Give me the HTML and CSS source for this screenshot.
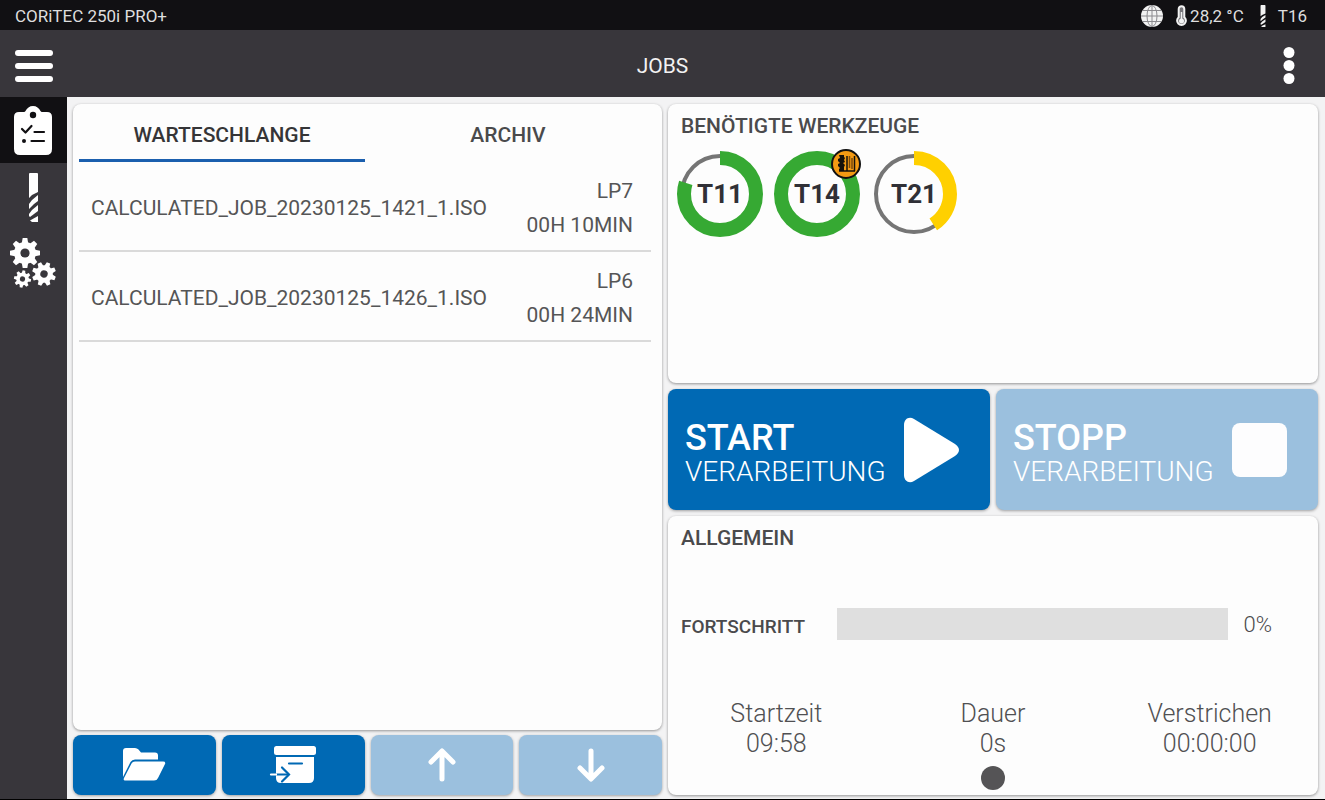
FILE: index.html
```html
<!DOCTYPE html>
<html lang="de">
<head>
<meta charset="utf-8">
<meta name="viewport" content="width=device-width, initial-scale=1">
<title>Jobs</title>
<link rel="stylesheet" href="styles.css">
</head>
<body>
<svg class="defs" aria-hidden="true">
  <defs>
    <mask id="gear-hole" maskUnits="userSpaceOnUse" x="-17" y="-17" width="34" height="34"><rect x="-17" y="-17" width="34" height="34" fill="#fff"/><circle r="4.600" fill="#000"/></mask>
    <g id="gear">
      <g mask="url(#gear-hole)">
        <circle r="11" />
        <path d="M-3.200-10L-2.300-15H2.300L3.200-10V10L2.300 15H-2.300L-3.200 10Z"/>
        <path transform="rotate(45)" d="M-3.200-10L-2.300-15H2.300L3.200-10V10L2.300 15H-2.300L-3.200 10Z"/>
        <path transform="rotate(90)" d="M-3.200-10L-2.300-15H2.300L3.200-10V10L2.300 15H-2.300L-3.200 10Z"/>
        <path transform="rotate(135)" d="M-3.200-10L-2.300-15H2.300L3.200-10V10L2.300 15H-2.300L-3.200 10Z"/>
      </g>
    </g>
    <g id="drill">
      <path d="M1 1Q1 0 2 0H9Q10 0 10 1V19L4 22L1 25Z"/>
      <path d="M10 22V28L6 31L1 36V31L4 27Z"/>
      <path d="M10 32V38L6 41L2 44L1 43V41L4 37Z"/>
      <path d="M10 43V49H4L2 47.500Z"/>
    </g>
  </defs>
</svg>
<div class="app">
  <header class="statusbar">
    <span>CORiTEC 250i PRO+</span>
    <div class="status">
      <svg class="globe" viewBox="0 0 22 22" aria-hidden="true"><circle cx="11" cy="11" r="11" fill="#f2f2f2"/><g fill="none" stroke="#8b8a8e" stroke-width="1"><ellipse cx="11" cy="11" rx="5" ry="10.500"/><path d="M11 0V22M0 11H22M2 5.500H20M2 16.500H20"/></g></svg>
      <span class="temperature">
        <svg width="11" height="22" viewBox="0 0 11 22" aria-hidden="true"><path d="M5.500 1.200A2.800 2.800 0 0 1 8.300 4V12.200A4.400 4.400 0 1 1 2.700 12.200V4A2.800 2.800 0 0 1 5.500 1.200Z" fill="#77767a" stroke="#f2f2f2" stroke-width="2"/><circle cx="5.500" cy="16" r="2.500" fill="#f2f2f2"/><path d="M5.500 7V16" stroke="#f2f2f2" stroke-width="1.500"/></svg>
        28,2 °C
      </span>
      <span class="tool-now">
        <svg width="6" height="22" viewBox="0 0 11 49" preserveAspectRatio="none" fill="#f2f2f2" aria-hidden="true"><use href="#drill"/></svg>
        T16
      </span>
    </div>
  </header>
  <div class="titlebar">
    <button class="icon-button" aria-label="Menü"><svg width="38" height="32" viewBox="0 0 38 32" fill="#fff"><rect width="38" height="6" rx="3"/><rect y="13" width="38" height="6" rx="3"/><rect y="26" width="38" height="6" rx="3"/></svg></button>
    <h1>JOBS</h1>
    <button class="icon-button more" aria-label="Mehr"><svg width="12" height="38" viewBox="0 0 12 38" fill="#fff"><circle cx="6" cy="5.500" r="5.500"/><circle cx="6" cy="18.500" r="5.500"/><circle cx="6" cy="31.500" r="5.500"/></svg></button>
  </div>
  <div class="body">
    <nav class="sidebar">
      <button class="nav-item active" aria-label="Jobs">
        <svg width="38" height="50" viewBox="0 0 38 50"><path fill="#fff" d="M5 6H10Q11 6 11.500 5C13 2 15.500 0 19 0S25 2 26.500 5Q27 6 28 6H33Q38 6 38 11V43Q38 49 32 49H6Q0 49 0 43V11Q0 6 5 6Z"/><circle cx="19" cy="9" r="3.200" fill="#111013"/><g fill="none" stroke="#111013" stroke-width="2.200" stroke-linecap="round" stroke-linejoin="round"><path d="M8 23L11.500 26.500L17.500 20M20.500 26H30M17.500 35H30"/></g><circle cx="10" cy="35" r="2" fill="#111013"/></svg>
      </button>
      <button class="nav-item" aria-label="Werkzeuge"><svg width="11" height="49" viewBox="0 0 11 49" fill="#fff"><use href="#drill"/></svg></button>
      <button class="nav-item" aria-label="Einstellungen"><svg width="46" height="50" viewBox="0 0 46 50" fill="#fff"><use href="#gear" transform="translate(15 15)"/><use href="#gear" transform="translate(34 36) rotate(22) scale(.8)"/><use href="#gear" transform="translate(12.500 41) rotate(10) scale(.57)"/></svg></button>
    </nav>
    <main class="main">
      <section class="queue">
        <div class="card jobs">
          <div class="tabs" role="tablist">
            <button class="tab selected" role="tab" aria-selected="true">WARTESCHLANGE</button>
            <button class="tab" role="tab" aria-selected="false">ARCHIV</button>
          </div>
          <ul class="job-list">
            <li class="job"><span>CALCULATED_JOB_20230125_1421_1.ISO</span><span class="meta">LP7<br>00H 10MIN</span></li>
            <li class="job"><span>CALCULATED_JOB_20230125_1426_1.ISO</span><span class="meta">LP6<br>00H 24MIN</span></li>
          </ul>
        </div>
        <div class="actions">
          <button class="action" aria-label="Öffnen"><svg width="43" height="34" viewBox="0 0 43 34" fill="#fff"><path d="M0 29V3Q0 0 3 0H12Q14 0 15.500 1.500L18 4.500H32Q35 4.500 35 7.500V11.500H12Q9 11.500 7.500 14Z"/><path d="M12 13.500H40Q43 13.500 42 16L35 30Q34 32.500 31 32.500H2Q0 32.500 1 30L8.500 15.500Q9.500 13.500 12 13.500Z"/></svg></button>
          <button class="action" aria-label="Archivieren"><svg width="46" height="38" viewBox="0 0 46 38"><rect x="4" width="42" height="9" rx="2.500" fill="#fff"/><path d="M6 11H44V32Q44 37 39 37H11Q6 37 6 32Z" fill="#fff"/><path d="M19 17.500H32M7 28.500H17" stroke="#0069b4" stroke-width="2.200" stroke-linecap="round"/><path d="M1 28.500H6" stroke="#fff" stroke-width="2.200" stroke-linecap="round"/><path d="M12 21.500L19 28.500L12 35.500" fill="none" stroke="#0069b4" stroke-width="2.200" stroke-linecap="round"/></svg></button>
          <button class="action" disabled aria-label="Nach oben"><svg width="28" height="34" viewBox="0 0 28 34" fill="none" stroke="#fff" stroke-width="5" stroke-linecap="round" stroke-linejoin="round"><path d="M14 31V4M3 14L14 3L25 14"/></svg></button>
          <button class="action" disabled aria-label="Nach unten"><svg width="28" height="34" viewBox="0 0 28 34" fill="none" stroke="#fff" stroke-width="5" stroke-linecap="round" stroke-linejoin="round"><path d="M14 3V30M3 20L14 31L25 20"/></svg></button>
        </div>
      </section>
      <section class="machine">
        <div class="card tools">
          <h2>BENÖTIGTE WERKZEUGE</h2>
          <div class="tool-list">
            <div class="tool"><svg viewBox="0 0 86 86" aria-hidden="true"><circle class="track" cx="43" cy="43" r="38"/><circle class="level ok" cx="43" cy="43" r="36" pathLength="100" stroke-dasharray="80 100"/></svg><span>T11</span></div>
            <div class="tool"><svg viewBox="0 0 86 86" aria-hidden="true"><circle class="level ok" cx="43" cy="43" r="36"/></svg><span>T14</span>
              <svg class="badge" viewBox="0 0 30 30" aria-hidden="true"><circle cx="15" cy="15" r="14" fill="#f39a13" stroke="#111" stroke-width="2"/><path d="M8 6H13V8L14 9L13 11L14 13L12 14L14 16L13 18V22H8V20L9 19L7 17V15L9 14L7 12V10L9 9Z" fill="#15110b"/><path d="M16 7V22M23.500 7V22M8 22H24" fill="none" stroke="#15110b" stroke-width="1.500"/><path d="M18.500 7V19M21 9V20" fill="none" stroke="#7a4a0c" stroke-width="1.500"/></svg>
            </div>
            <div class="tool"><svg viewBox="0 0 86 86" aria-hidden="true"><circle class="track" cx="43" cy="43" r="38"/><circle class="level low" cx="43" cy="43" r="36" pathLength="100" stroke-dasharray="41 100"/></svg><span>T21</span></div>
          </div>
        </div>
        <div class="controls">
          <button class="control"><span class="caption"><strong>START</strong><span>VERARBEITUNG</span></span><svg width="55" height="64" viewBox="0 0 55 64" fill="#fff"><path d="M0 7C0 1 5 -2 10 1L51 26Q59 32 51 38L10 63C5 66 0 63 0 57Z"/></svg></button>
          <button class="control" disabled><span class="caption"><strong>STOPP</strong><span>VERARBEITUNG</span></span><svg width="55" height="64" viewBox="0 0 55 64" fill="#fdfdfe"><rect x="0" y="5" width="55" height="54" rx="8"/></svg></button>
        </div>
        <div class="card general">
          <h2>ALLGEMEIN</h2>
          <div class="progress-row"><label for="progress">FORTSCHRITT</label><progress id="progress" value="0" max="100"></progress><output for="progress">0%</output></div>
          <dl class="times">
            <div><dt>Startzeit</dt><dd>09:58</dd></div>
            <div><dt>Dauer</dt><dd>0s</dd></div>
            <div><dt>Verstrichen</dt><dd>00:00:00</dd></div>
          </dl>
          <span class="page-dot"></span>
        </div>
      </section>
    </main>
  </div>
</div>
</body>
</html>
```
FILE: styles.css
```css
* { box-sizing: border-box; }
body { margin: 0; font-family: Roboto, "Liberation Sans", sans-serif; color: #4a4a4c; background: #000; }
button { font: inherit; color: inherit; border: 0; padding: 0; background: none; }
h1, h2, ul, dl, dd { margin: 0; padding: 0; }
svg { display: block; flex: none; overflow: visible; }
.defs { position: absolute; width: 0; height: 0; }
.app { display: flex; flex-direction: column; min-height: 100vh; padding-bottom: 1px; }
.statusbar { display: flex; justify-content: space-between; align-items: center; height: 30px; padding: 2px 18px 0 15px; background: #111013; color: #dededf; font-size: 17px; }
.status, .temperature, .tool-now { display: flex; align-items: center; }
.status { gap: 13px; }
.globe { width: 22px; height: 22px; }
.temperature { gap: 3px; }
.tool-now { gap: 12px; margin-left: 3px; }
.titlebar { display: grid; grid-template-columns: 1fr auto 1fr; align-items: center; height: 67px; padding: 4px 30px 0 15px; background: #38363b; color: #f2f2f2; }
.titlebar h1 { padding-left: 15px; font-size: 21px; font-weight: 400; }
.icon-button { justify-self: start; }
.more { justify-self: end; }
.body { flex: 1; display: flex; background: #f3f3f4; }
.sidebar { width: 67px; flex: none; background: #38363b; }
.nav-item { display: flex; align-items: center; justify-content: center; width: 100%; height: 66px; padding: 2px 1px 0 0; }
.nav-item.active { background: #111013; }
.main { flex: 1; display: grid; grid-template-columns: 589fr 650fr; gap: 6px; padding: 7px 7px 4px 6px; }
.queue { display: grid; grid-template-rows: 1fr 60px; gap: 5px; min-width: 0; }
.machine { display: grid; grid-template-rows: 1fr 121px 1fr; gap: 6px; min-width: 0; }
.card { background: #fdfdfd; border-radius: 8px; box-shadow: 0 1px 3px rgba(0, 0, 0, .4); }
.jobs { padding: 0 11px 0 6px; }
.tabs { display: grid; grid-template-columns: 1fr 1fr; height: 58px; }
.tab { border-bottom: 3px solid transparent; padding-top: 6px; font-size: 21px; font-weight: 500; }
.tab.selected { color: #353537; border-color: #1b5fae; }
.job-list { list-style: none; font-size: 21px; color: #555556; }
.job { display: flex; justify-content: space-between; align-items: center; height: 90px; padding: 4px 18px 0 12px; border-bottom: 2px solid #dadada; }
.meta { text-align: right; line-height: 34px; }
.actions { display: grid; grid-template-columns: repeat(4, 1fr); gap: 6px; }
.action, .control { background: #0069b4; border-radius: 8px; box-shadow: 0 1px 3px rgba(0, 0, 0, .35); color: #fff; }
.action { display: flex; align-items: center; justify-content: center; }
.action:disabled, .control:disabled { background: #9bc0de; color: #fff; }
.tools, .general { padding: 10px 13px 3px; }
h2 { font-size: 21px; line-height: 24px; font-weight: 500; }
.tool-list { display: flex; gap: 11px; margin: 13px 0 0 -4px; }
.tool { position: relative; display: grid; place-items: center; width: 86px; height: 86px; color: #303036; font-size: 26px; font-weight: 700; }
.tool > * { grid-area: 1 / 1; }
.tool .badge { position: absolute; top: -2px; right: -1px; width: 30px; height: 30px; }
.track, .level { fill: none; }
.track { stroke: #757575; stroke-width: 4; }
.level { stroke-width: 14; transform: rotate(-90deg); transform-origin: center; }
.ok { stroke: #36a933; }
.low { stroke: #ffd000; }
.controls { display: grid; grid-template-columns: 1fr 1fr; gap: 6px; }
.control { display: flex; align-items: center; justify-content: space-between; padding: 0 31px 0 17px; text-align: left; }
.caption { display: grid; padding-top: 10px; font-size: 28px; line-height: 33px; font-weight: 300; }
.caption strong { font-size: 36px; font-weight: 500; }
.general { display: flex; flex-direction: column; }
.progress-row { display: flex; align-items: center; margin-top: 58px; padding-right: 33px; font-size: 22px; font-weight: 300; }
.progress-row label { width: 156px; padding-top: 4px; font-size: 19px; font-weight: 500; }
progress { appearance: none; flex: 1; min-width: 0; height: 32px; border: 0; background: #dfdfdf; }
progress::-webkit-progress-bar { background: #dfdfdf; }
progress::-webkit-progress-value { background: #0069b4; }
.progress-row output { margin-left: 16px; }
.times { display: grid; grid-template-columns: repeat(3, 1fr); margin: 59px -13px 0; text-align: center; font-size: 25px; line-height: 30px; font-weight: 300; color: #505052; }
.page-dot { align-self: center; width: 24px; height: 24px; margin-top: 7px; border-radius: 50%; background: #555456; }
```
